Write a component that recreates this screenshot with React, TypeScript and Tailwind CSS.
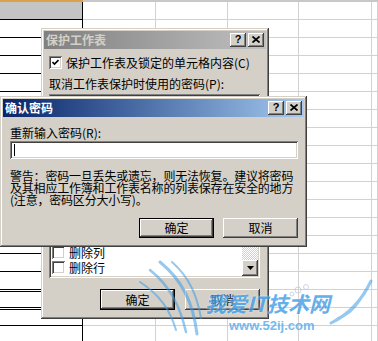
import React from "react";

const FONT = "font-['Noto_Sans_CJK_SC','Noto_Sans',sans-serif]";
const RAISED_WIN =
  "shadow-[inset_-1px_-1px_0_#404040,inset_1px_1px_0_#d4d0c8,inset_-2px_-2px_0_#808080,inset_2px_2px_0_#ffffff]";
const RAISED_BTN =
  "shadow-[inset_-1px_-1px_0_#404040,inset_1px_1px_0_#ffffff,inset_-2px_-2px_0_#808080,inset_2px_2px_0_#d4d0c8]";
const DEFAULT_BTN =
  "border border-black shadow-[inset_-1px_-1px_0_#404040,inset_1px_1px_0_#ffffff,inset_-2px_-2px_0_#808080,inset_2px_2px_0_#d4d0c8]";
const SUNKEN =
  "shadow-[inset_1px_1px_0_#808080,inset_-1px_-1px_0_#ffffff,inset_2px_2px_0_#404040,inset_-2px_-2px_0_#d4d0c8]";

function CaptionButtons() {
  return (
    <div className="ml-auto flex items-center gap-[2px] pr-[2px]">
      <div className={`w-[16px] h-[14px] bg-[#d4d0c8] ${RAISED_BTN} flex items-center justify-center`}>
        <span className="text-[11px] leading-none font-bold text-black font-['Liberation_Sans',sans-serif] -mt-px">?</span>
      </div>
      <div className={`w-[16px] h-[14px] bg-[#d4d0c8] ${RAISED_BTN} flex items-center justify-center`}>
        <svg width="8" height="7" viewBox="0 0 8 7" className="-mt-px">
          <path d="M0.5 0.5 L7.5 6.5 M7.5 0.5 L0.5 6.5" stroke="#000" strokeWidth="1.7" />
        </svg>
      </div>
    </div>
  );
}

function CheckBox({ checked }: { checked?: boolean }) {
  return (
    <div className={`w-[13px] h-[13px] shrink-0 bg-white ${SUNKEN} flex items-center justify-center`}>
      {checked && (
        <svg width="7" height="7" viewBox="0 0 7 7">
          <path d="M0.5 3 L2.5 5 L6.5 1" stroke="#000" strokeWidth="1.6" fill="none" />
        </svg>
      )}
    </div>
  );
}

const COLS = [
  { w: "w-[83px]", left: true },
  { w: "w-[73px]", left: false },
  { w: "w-[72px]", left: false },
  { w: "w-[71px]", left: false },
  { w: "w-[73px]", left: false },
  { w: "flex-1", left: false },
];

function Sheet() {
  const rows = Array.from({ length: 19 }, (_, i) => i);
  return (
    <div className="flex flex-col w-full h-full">
      <div className="flex h-[2px] shrink-0">
        <div className="w-[83px] bg-[#dca04a]" />
        <div className="flex-1 bg-[#c8c8c8]" />
      </div>
      {rows.map((r) => (
        <div key={r} className="flex h-[18px] shrink-0">
          {COLS.map((c, ci) =>
            c.left ? (
              <div
                key={ci}
                className={`${c.w} shrink-0 border-r border-b border-black ${r === 0 ? "bg-[#c4c4c4]" : "bg-white"}`}
              >
                {(r === 16 || r === 17) && <div className="mt-px h-px bg-black" />}
              </div>
            ) : (
              <div key={ci} className={`${c.w} shrink-0 border-r border-b border-[#d2d2d2] bg-white`} />
            )
          )}
        </div>
      ))}
    </div>
  );
}

function BackDialog() {
  const items = ["设置列格式", "设置行格式", "插入列", "插入行", "插入超链接", "删除列", "删除行"];
  return (
    <div
      className={`absolute left-[41px] top-[28px] w-[228px] h-[291px] bg-[#d4d0c8] ${RAISED_WIN} p-[3px] flex flex-col`}
    >
      <div className="h-[18px] shrink-0 flex items-center bg-gradient-to-r from-[#808080] to-[#c0c0c0]">
        <span className="pl-[2px] text-[12px] leading-none font-bold text-[#d4d0c8]">保护工作表</span>
        <CaptionButtons />
      </div>
      <div className="mt-[7px] h-[13px] flex items-center pl-[5px]">
        <CheckBox checked />
        <span className="ml-[4px] text-[12px] leading-[14px] text-black whitespace-nowrap">
          保护工作表及锁定的单元格内容(C)
        </span>
      </div>
      <div className="mt-[8px] pl-[5px] h-[14px] text-[12px] leading-[14px] text-black whitespace-nowrap">
        取消工作表保护时使用的密码(P):
      </div>
      <div className={`mt-[3px] ml-[5px] mr-[6px] h-[20px] bg-white ${SUNKEN}`} />
      <div className="mt-[8px] pl-[5px] h-[14px] text-[12px] leading-[14px] text-black whitespace-nowrap">
        允许此工作表的所有用户进行(O):
      </div>
      <div className={`mt-[2px] ml-[5px] mr-[6px] h-[140px] bg-white ${SUNKEN} p-[2px] flex`}>
        <div className="flex-1 flex flex-col justify-end overflow-hidden pb-[1px]">
          {items.map((t) => (
            <div key={t} className="h-[15px] shrink-0 flex items-center pl-[1px]">
              <CheckBox />
              <span className="ml-[4px] text-[12px] leading-[14px] text-black">{t}</span>
            </div>
          ))}
        </div>
        <div className="w-[16px] flex flex-col">
          <div className="flex-1 bg-[image:repeating-conic-gradient(#d4d0c8_0_25%,#ffffff_0_50%)] bg-[length:2px_2px]" />
          <div className={`h-[16px] bg-[#d4d0c8] ${RAISED_BTN} flex items-center justify-center`}>
            <svg width="7" height="4" viewBox="0 0 7 4">
              <path d="M0 0 H7 L3.5 4 Z" fill="#000" />
            </svg>
          </div>
        </div>
      </div>
      <div className="mt-[11px] flex justify-end gap-[10px] pr-[6px]">
        <div className={`w-[75px] h-[21px] bg-[#d4d0c8] ${DEFAULT_BTN} flex items-center justify-center text-[12px] text-black`}>
          确定
        </div>
        <div className={`w-[75px] h-[21px] bg-[#d4d0c8] ${RAISED_BTN} flex items-center justify-center text-[12px] text-black`}>
          取消
        </div>
      </div>
    </div>
  );
}

function FrontDialog() {
  return (
    <div
      className={`absolute left-0 top-[96px] w-[307px] h-[151px] bg-[#d4d0c8] ${RAISED_WIN} p-[3px] flex flex-col`}
    >
      <div className="h-[18px] shrink-0 flex items-center bg-gradient-to-r from-[#0a246a] to-[#a6caf0]">
        <span className="pl-[2px] text-[12px] leading-none font-bold text-white">确认密码</span>
        <CaptionButtons />
      </div>
      <div className="mt-[9px] pl-[7px] h-[14px] text-[12px] leading-[14px] text-black whitespace-nowrap">
        重新输入密码(R):
      </div>
      <div className={`mt-px ml-[7px] mr-[6px] h-[18px] bg-white ${SUNKEN} flex items-center pl-[4px]`}>
        <div className="w-px h-[12px] bg-black" />
      </div>
      <div className="mt-[11px] pl-[7px] text-[12px] leading-[12px] text-black whitespace-nowrap tracking-[-0.2px]">
        <div>警告：密码一旦丢失或遗忘，则无法恢复。建议将密码</div>
        <div>及其相应工作簿和工作表名称的列表保存在安全的地方</div>
        <div>(注意，密码区分大小写)。</div>
      </div>
      <div className="mt-auto mb-[6px] flex justify-end gap-[9px] pr-[6px]">
        <div className={`w-[75px] h-[20px] bg-[#d4d0c8] ${DEFAULT_BTN} flex items-center justify-center text-[12px] text-black`}>
          确定
        </div>
        <div className={`w-[75px] h-[20px] bg-[#d4d0c8] ${RAISED_BTN} flex items-center justify-center text-[12px] text-black`}>
          取消
        </div>
      </div>
    </div>
  );
}

function Watermark() {
  return (
    <div className="absolute inset-0 pointer-events-none">
      <svg width="378" height="341" viewBox="0 0 378 341" className="absolute left-0 top-0">
        <g fill="none" stroke="#3f9de6" strokeLinecap="round" opacity="0.55">
          <path d="M160 262 C182 280 193 302 197 334" strokeWidth="3" />
          <path d="M150 270 C170 286 180 306 186 332" strokeWidth="2.5" />
          <path d="M172 262 C190 278 197 296 201 318" strokeWidth="2" />
          <path d="M140 282 C160 295 170 310 176 330" strokeWidth="2" />
          <path d="M371 281 C362 300 350 314 331 323" strokeWidth="3" />
          <path d="M366 290 C358 304 348 314 336 320" strokeWidth="2" />
          <path d="M360 300 C354 310 346 316 338 318" strokeWidth="2" />
        </g>
        <g fill="none" stroke="#b9c6d6" strokeWidth="1" opacity="0.7">
          <circle cx="298" cy="290" r="3" />
          <circle cx="306" cy="287" r="2.5" />
          <circle cx="292" cy="294" r="2" />
        </g>
      </svg>
      <div className="absolute left-[205px] top-[293px] text-[21px] leading-none font-bold italic text-[#3f9de6] opacity-80 whitespace-nowrap [text-shadow:0_0_2px_#ffffff]">
        我爱IT技术网
      </div>
      <div className="absolute left-[229px] top-[319px] text-[13px] leading-none font-bold text-[#4aa6ea] opacity-75 whitespace-nowrap font-['Liberation_Sans',sans-serif]">
        www.52ij.com
      </div>
    </div>
  );
}

export default function App() {
  return (
    <div className={`relative w-[378px] h-[341px] overflow-hidden bg-white ${FONT}`}>
      <Sheet />
      <BackDialog />
      <FrontDialog />
      <Watermark />
    </div>
  );
}
